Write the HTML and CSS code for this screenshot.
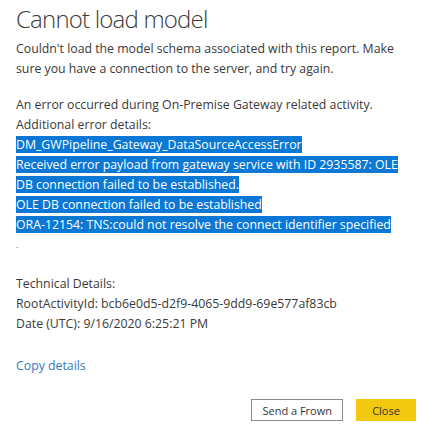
FILE: index.html
```html
<!DOCTYPE html>
<html lang="en">
<head>
    <meta charset="UTF-8">
    <meta name="viewport" content="width=device-width, initial-scale=1.0">
    <title>Cannot load model</title>
    <link rel="stylesheet" href="styles.css">
</head>
<body>
    <div class="dialog">
        <h1 class="title">Cannot load model</h1>

        <p class="message">Couldn't load the model schema associated with this report. Make<br>sure you have a connection to the server, and try again.</p>

        <div class="details">
            <p>An error occurred during On-Premise Gateway related activity.</p>
            <p>Additional error details:</p>
            <p class="selected"><span>DM_GWPipeline_Gateway_DataSourceAccessError</span></p>
            <p class="selected"><span>Received error payload from gateway service with ID 2935587: OLE</span></p>
            <p class="selected"><span>DB connection failed to be established.</span></p>
            <p class="selected"><span>OLE DB connection failed to be established</span></p>
            <p class="selected"><span>ORA-12154: TNS:could not resolve the connect identifier specified</span></p>
            <p class="dot">.</p>
        </div>

        <div class="technical">
            <p>Technical Details:</p>
            <p>RootActivityId: bcb6e0d5-d2f9-4065-9dd9-69e577af83cb</p>
            <p>Date (UTC): 9/16/2020 6:25:21 PM</p>
        </div>

        <a class="copy-link" href="#">Copy details</a>

        <div class="actions">
            <button class="btn btn-secondary">Send a Frown</button>
            <button class="btn btn-primary">Close</button>
        </div>
    </div>
</body>
</html>
```

FILE: styles.css
```css
body {
    margin: 0;
    background-color: #fff;
    color: #3a3a3a;
    font-family: "Open Sans", "Noto Sans", sans-serif;
    font-size: 12.3px;
}

.dialog {
    padding: 0 19px 0 16px;
}

.title {
    margin: 0;
    padding-top: 2px;
    font-size: 24px;
    font-weight: 300;
    line-height: 34px;
    color: #3a3a3a;
    letter-spacing: -0.8px;
}

p {
    margin: 0;
    line-height: 20px;
}

.message {
    margin-top: 3px;
}

.details {
    margin-top: 16px;
}

.selected span {
    background-color: #0a78d4;
    color: #fff;
}

.dot {
    font-size: 8px;
}

.technical {
    margin-top: 19px;
}

.copy-link {
    display: block;
    margin-top: 23px;
    color: #3478bc;
    text-decoration: none;
}

.actions {
    display: flex;
    justify-content: flex-end;
    gap: 13px;
    margin-top: 25px;
}

.btn {
    height: 22px;
    padding: 0 10px;
    font-family: "Open Sans", "Noto Sans", sans-serif;
    font-size: 11px;
    color: #333;
    cursor: pointer;
}

.btn-secondary {
    background-color: #fff;
    border: 1px solid #8a8a8a;
    min-width: 83px;
}

.btn-primary {
    background-color: #f2c811;
    border: 1px solid #f2c811;
    min-width: 60px;
}
```
